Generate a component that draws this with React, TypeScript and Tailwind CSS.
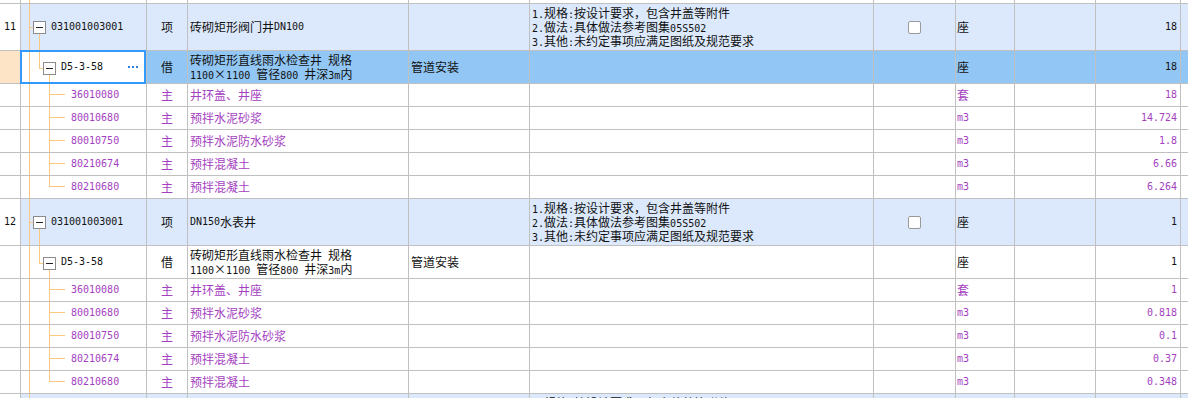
import React from "react";

type Sub = { code: string; name: string; unit: string; qty: string };
type Group = {
  no: string;
  code: string;
  name: string;
  unit: string;
  qty: string;
  refQty: string;
  subs: Sub[];
  selected?: boolean;
};

const DESC = [
  "1.规格:按设计要求，包含井盖等附件",
  "2.做法:具体做法参考图集05S502",
  "3.其他:未约定事项应满足图纸及规范要求",
];

const REF_NAME = ["砖砌矩形直线雨水检查井 规格", "1100×1100 管径800 井深3m内"];

const groups: Group[] = [
  {
    no: "11",
    code: "031001003001",
    name: "砖砌矩形阀门井DN100",
    unit: "座",
    qty: "18",
    refQty: "18",
    selected: true,
    subs: [
      { code: "36010080", name: "井环盖、井座", unit: "套", qty: "18" },
      { code: "80010680", name: "预拌水泥砂浆", unit: "m3", qty: "14.724" },
      { code: "80010750", name: "预拌水泥防水砂浆", unit: "m3", qty: "1.8" },
      { code: "80210674", name: "预拌混凝土", unit: "m3", qty: "6.66" },
      { code: "80210680", name: "预拌混凝土", unit: "m3", qty: "6.264" },
    ],
  },
  {
    no: "12",
    code: "031001003001",
    name: "DN150水表井",
    unit: "座",
    qty: "1",
    refQty: "1",
    subs: [
      { code: "36010080", name: "井环盖、井座", unit: "套", qty: "1" },
      { code: "80010680", name: "预拌水泥砂浆", unit: "m3", qty: "0.818" },
      { code: "80010750", name: "预拌水泥防水砂浆", unit: "m3", qty: "0.1" },
      { code: "80210674", name: "预拌混凝土", unit: "m3", qty: "0.37" },
      { code: "80210680", name: "预拌混凝土", unit: "m3", qty: "0.348" },
    ],
  },
];

// latin runs in a narrow mono face, CJK runs in Noto
function Mix({ s }: { s: string }) {
  const parts = s.match(/[\x20-\x7e]+|[^\x20-\x7e]+/g) ?? [];
  return (
    <>
      {parts.map((p, i) =>
        /^[\x20-\x7e]/.test(p) ? (
          <span key={i} className="font-['DejaVu_Sans_Mono',monospace] text-[10px] leading-[10px] whitespace-pre">
            {p}
          </span>
        ) : (
          <span key={i}>{p}</span>
        )
      )}
    </>
  );
}

const line = "absolute bg-[#fcc880]";

function Box({ className }: { className: string }) {
  return (
    <div className={`absolute w-[13px] h-[13px] border border-[#8c8c8c] bg-white flex items-center justify-center ${className}`}>
      <div className="w-[7px] h-px bg-[#222]" />
    </div>
  );
}

function Checkbox() {
  return <div className="w-[13px] h-[13px] rounded-[2px] border border-[#9a9a9a] bg-white" />;
}

function MainRow({ g, partial }: { g: Group; partial?: boolean }) {
  return (
    <div className="flex h-[47px] shrink-0 border-b border-[#c0c0c0] bg-[#dce9fc]">
      <div className="w-[21px] shrink-0 border-r border-[#c0c0c0] bg-white flex items-center justify-center">
        {!partial && <Mix s={g.no} />}
      </div>
      <div className="relative w-[126px] shrink-0 border-r border-[#c0c0c0] flex items-center pl-[30px]">
        <div className={`${line} left-[8px] top-0 bottom-0 w-px`} />
        <div className={`${line} left-[8px] top-[23px] w-[4px] h-px`} />
        <Box className="left-[12px] top-[17px]" />
        {!partial && <div className={`${line} left-[18px] top-[30px] bottom-0 w-px`} />}
        {!partial && <Mix s={g.code} />}
      </div>
      <div className="w-[41px] shrink-0 border-r border-[#c0c0c0] flex items-center justify-center">
        {!partial && "项"}
      </div>
      <div className="w-[221px] shrink-0 border-r border-[#c0c0c0] flex items-center pl-[2px]">
        {!partial && <Mix s={g.name} />}
      </div>
      <div className="w-[121px] shrink-0 border-r border-[#c0c0c0]" />
      <div className="w-[344px] shrink-0 border-r border-[#c0c0c0] flex flex-col justify-center pl-[2px] leading-[14px]">
        {DESC.map((d) => (
          <div key={d}>
            <Mix s={d} />
          </div>
        ))}
      </div>
      <div className="w-[82px] shrink-0 border-r border-[#c0c0c0] flex items-center justify-center">
        <Checkbox />
      </div>
      <div className="w-[59px] shrink-0 border-r border-[#c0c0c0] flex items-center pl-[1px]">
        {!partial && g.unit}
      </div>
      <div className="w-[81px] shrink-0 border-r border-[#c0c0c0]" />
      <div className="w-[85px] shrink-0 border-r border-[#c0c0c0] flex items-center justify-end pr-[3px]">
        {!partial && <Mix s={g.qty} />}
      </div>
      <div className="flex-1" />
    </div>
  );
}

function RefRow({ g }: { g: Group }) {
  const sel = g.selected;
  return (
    <div className={`flex h-[33px] shrink-0 border-b border-[#c0c0c0] ${sel ? "bg-[#92c7f5]" : "bg-white"}`}>
      <div className={`w-[21px] shrink-0 border-r border-[#c0c0c0] ${sel ? "bg-[#fde4c7]" : "bg-white"}`} />
      <div className="relative w-[126px] shrink-0 border-r border-[#c0c0c0] bg-white flex items-center pl-[40px]">
        <div className={`${line} left-[8px] top-0 bottom-0 w-px`} />
        <div className={`${line} left-[18px] top-0 h-[17px] w-px`} />
        <div className={`${line} left-[18px] top-[17px] w-[4px] h-px`} />
        <Box className="left-[22px] top-[11px]" />
        <div className={`${line} left-[28px] top-[24px] bottom-0 w-px`} />
        <Mix s="D5-3-58" />
        {sel && (
          <>
            <div className="ml-auto mr-[8px] flex gap-[2px]">
              <div className="w-[2px] h-[2px] bg-[#2f7fe0]" />
              <div className="w-[2px] h-[2px] bg-[#2f7fe0]" />
              <div className="w-[2px] h-[2px] bg-[#2f7fe0]" />
            </div>
            <div className="absolute -left-px -top-px right-0 -bottom-px border-2 border-[#3399ff] z-10" />
          </>
        )}
      </div>
      <div className="w-[41px] shrink-0 border-r border-[#c0c0c0] flex items-center justify-center">借</div>
      <div className="w-[221px] shrink-0 border-r border-[#c0c0c0] flex flex-col justify-center pl-[2px] leading-[14px]">
        {REF_NAME.map((n) => (
          <div key={n}>
            <Mix s={n} />
          </div>
        ))}
      </div>
      <div className="w-[121px] shrink-0 border-r border-[#c0c0c0] flex items-center pl-[2px]">管道安装</div>
      <div className="w-[344px] shrink-0 border-r border-[#c0c0c0]" />
      <div className="w-[82px] shrink-0 border-r border-[#c0c0c0]" />
      <div className="w-[59px] shrink-0 border-r border-[#c0c0c0] flex items-center pl-[1px]">座</div>
      <div className="w-[81px] shrink-0 border-r border-[#c0c0c0]" />
      <div className="w-[85px] shrink-0 border-r border-[#c0c0c0] flex items-center justify-end pr-[3px]">
        <Mix s={g.refQty} />
      </div>
      <div className="flex-1" />
    </div>
  );
}

function SubRow({ s, last }: { s: Sub; last: boolean }) {
  return (
    <div className="flex h-[23px] shrink-0 border-b border-[#c0c0c0] bg-white text-[#a43fbf]">
      <div className="w-[21px] shrink-0 border-r border-[#c0c0c0]" />
      <div className="relative w-[126px] shrink-0 border-r border-[#c0c0c0] flex items-center pl-[50px]">
        <div className={`${line} left-[8px] top-0 bottom-0 w-px`} />
        <div className={`${line} left-[28px] top-0 w-px ${last ? "h-[11px]" : "bottom-0"}`} />
        <div className={`${line} left-[28px] top-[10px] w-[16px] h-px`} />
        <Mix s={s.code} />
      </div>
      <div className="w-[41px] shrink-0 border-r border-[#c0c0c0] flex items-center justify-center">主</div>
      <div className="w-[221px] shrink-0 border-r border-[#c0c0c0] flex items-center pl-[2px]">{s.name}</div>
      <div className="w-[121px] shrink-0 border-r border-[#c0c0c0]" />
      <div className="w-[344px] shrink-0 border-r border-[#c0c0c0]" />
      <div className="w-[82px] shrink-0 border-r border-[#c0c0c0]" />
      <div className="w-[59px] shrink-0 border-r border-[#c0c0c0] flex items-center pl-[1px]">
        <Mix s={s.unit} />
      </div>
      <div className="w-[81px] shrink-0 border-r border-[#c0c0c0]" />
      <div className="w-[85px] shrink-0 border-r border-[#c0c0c0] flex items-center justify-end pr-[3px]">
        <Mix s={s.qty} />
      </div>
      <div className="flex-1" />
    </div>
  );
}

function TopStub() {
  return (
    <div className="flex h-[4px] shrink-0 border-b border-[#c0c0c0] bg-white">
      <div className="w-[21px] shrink-0 border-r border-[#c0c0c0]" />
      <div className="relative w-[126px] shrink-0 border-r border-[#c0c0c0]">
        <div className={`${line} left-[8px] top-0 bottom-0 w-px`} />
      </div>
      <div className="w-[41px] shrink-0 border-r border-[#c0c0c0]" />
      <div className="w-[221px] shrink-0 border-r border-[#c0c0c0]" />
      <div className="w-[121px] shrink-0 border-r border-[#c0c0c0]" />
      <div className="w-[344px] shrink-0 border-r border-[#c0c0c0]" />
      <div className="w-[82px] shrink-0 border-r border-[#c0c0c0]" />
      <div className="w-[59px] shrink-0 border-r border-[#c0c0c0]" />
      <div className="w-[81px] shrink-0 border-r border-[#c0c0c0]" />
      <div className="w-[85px] shrink-0 border-r border-[#c0c0c0]" />
      <div className="flex-1" />
    </div>
  );
}

export default function App() {
  return (
    <div className="w-[1188px] h-[398px] overflow-hidden bg-white flex flex-col font-['Noto_Sans_CJK_SC',sans-serif] text-[12px] text-[#111]">
      <TopStub />
      {groups.map((g) => (
        <React.Fragment key={g.no}>
          <MainRow g={g} />
          <RefRow g={g} />
          {g.subs.map((s, i) => (
            <SubRow key={s.code + i} s={s} last={i === g.subs.length - 1} />
          ))}
        </React.Fragment>
      ))}
      <MainRow g={{ ...groups[1], no: "13" }} partial />
    </div>
  );
}
